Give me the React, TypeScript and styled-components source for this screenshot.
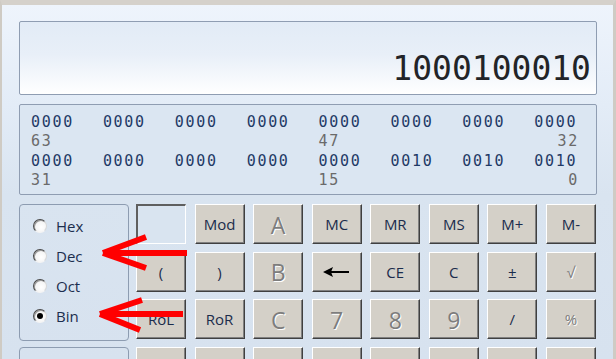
import React from "react";
import styled, { createGlobalStyle } from "styled-components";

const Global = createGlobalStyle`
  html, body { margin: 0; padding: 0; overflow: hidden; }
  body { width: 616px; height: 359px; background: #d4d0c8; }
`;

const Window = styled.div`
  position: relative;
  box-sizing: border-box;
  width: 616px;
  height: 359px;
  overflow: hidden;
  border-top: 5px solid #d5d1cb;
  border-left: 2px solid #cfcbc4;
  border-right: 3px solid #cfcbc4;
  background: linear-gradient(#eef4fc 0px, #e3ecf7 100px, #d9e4f0 190px, #d7e2ef 354px);
  padding: 16px 16px 0 17px;
  display: flex;
  flex-direction: column;
  gap: 9px;
  font-family: "Open Sans", "Noto Sans", sans-serif;
  & > * { flex-shrink: 0; }
`;

const Display = styled.div`
  box-sizing: border-box;
  height: 74px;
  border: 1px solid #8f9db2;
  border-radius: 2px;
  background: linear-gradient(#e2ebf6 0%, #e8eff8 45%, #ffffff 100%);
  display: flex;
  justify-content: flex-end;
  align-items: flex-end;
  padding: 0 5px 9px 0;
  font-family: "DejaVu Sans Mono", "Liberation Mono", monospace;
  font-size: 33px;
  line-height: 33px;
  color: #222428;
`;

const Bits = styled.div`
  box-sizing: border-box;
  height: 91px;
  border: 1px solid #8f9db2;
  border-radius: 2px;
  background: #dbe6f2;
  padding: 8px 0 0 11px;
  font-family: "DejaVu Sans Mono", "Liberation Mono", monospace;
  font-size: 15px;
  line-height: 19.3px;
`;

const BitRow = styled.div`
  display: grid;
  grid-template-columns: repeat(7, 71.9px) 43px;
`;

const Nibble = styled.span`
  color: #1f3a66;
  letter-spacing: 1.7px;
`;

const Index = styled.span<{ $right?: boolean }>`
  color: #6a6a6a;
  letter-spacing: 1.7px;
  text-align: ${(p) => (p.$right ? "right" : "left")};
  margin-right: ${(p) => (p.$right ? "-1.7px" : "0")};
`;

const Lower = styled.div`
  display: flex;
  gap: 7px;
`;

const LeftCol = styled.div`
  display: flex;
  flex-direction: column;
  gap: 6px;
`;

const Group = styled.div<{ $h: number }>`
  box-sizing: border-box;
  width: 110px;
  height: ${(p) => p.$h}px;
  border: 1px solid #8d9cb1;
  border-radius: 4px;
  padding: 6px 0 0 13px;
  display: flex;
  flex-direction: column;
`;

const RadioRow = styled.div`
  height: 30px;
  display: flex;
  align-items: center;
  gap: 9px;
  font-size: 15px;
  color: #1c2e4e;
`;

const RadioDot = styled.span<{ $on?: boolean }>`
  position: relative;
  box-sizing: border-box;
  width: 14px;
  height: 14px;
  border-radius: 50%;
  border: 1px solid;
  border-color: #4a4a4a #d8d8d8 #f4f4f4 #4a4a4a;
  background: radial-gradient(circle at 60% 60%, #ffffff 0%, #f2f2f2 70%, #c8c8c8 100%);
  box-shadow: inset 1px 1px 0 #9a9a9a;
  &::after {
    content: "";
    display: ${(p) => (p.$on ? "block" : "none")};
    position: absolute;
    left: 3px;
    top: 3px;
    width: 6px;
    height: 6px;
    border-radius: 50%;
    background: #000;
  }
`;

const Keys = styled.div`
  display: grid;
  grid-template-columns: repeat(8, 50px);
  grid-auto-rows: 40px;
  column-gap: 8.57px;
  row-gap: 7.67px;
`;

const Key = styled.div<{ $kind: string }>`
  box-sizing: border-box;
  display: flex;
  align-items: center;
  justify-content: center;
  background: #d4d0c8;
  border-top: 1px solid #ffffff;
  border-left: 1px solid #ffffff;
  border-right: 1px solid #404040;
  border-bottom: 1px solid #404040;
  box-shadow: inset -1px -1px 0 #808080;
  font-size: ${(p) => (p.$kind === "big" ? "23px" : "15px")};
  color: ${(p) => (p.$kind === "big" || p.$kind === "dim" ? "#7d7d7d" : "#1b2c4c")};
  text-shadow: ${(p) => (p.$kind === "big" || p.$kind === "dim" ? "1px 1px 0 #ffffff" : "none")};
  padding-top: ${(p) => (p.$kind === "big" ? "1px" : "0")};
`;

const Sunken = styled.div`
  box-sizing: border-box;
  border-top: 2px solid #5f5f5f;
  border-left: 2px solid #5f5f5f;
  border-right: 1px solid #ffffff;
  border-bottom: 1px solid #ffffff;
  background: #d9e4f0;
`;

const Overlay = styled.svg`
  position: absolute;
  left: -2px;
  top: -5px;
  pointer-events: none;
`;

const BackArrow = () => (
  <svg width="28" height="12" viewBox="0 0 28 12">
    <polygon points="0,6 10,1 8,6 10,11" fill="#000" />
    <rect x="7" y="5" width="19" height="2" fill="#000" />
  </svg>
);

type K = { l: string; k: string };
const keys: K[] = [
  { l: "", k: "sunken" },
  { l: "Mod", k: "n" },
  { l: "A", k: "big" },
  { l: "MC", k: "n" },
  { l: "MR", k: "n" },
  { l: "MS", k: "n" },
  { l: "M+", k: "n" },
  { l: "M-", k: "n" },
  { l: "(", k: "n" },
  { l: ")", k: "n" },
  { l: "B", k: "big" },
  { l: "", k: "back" },
  { l: "CE", k: "n" },
  { l: "C", k: "n" },
  { l: "±", k: "n" },
  { l: "√", k: "dim" },
  { l: "RoL", k: "n" },
  { l: "RoR", k: "n" },
  { l: "C", k: "big" },
  { l: "7", k: "big" },
  { l: "8", k: "big" },
  { l: "9", k: "big" },
  { l: "/", k: "n" },
  { l: "%", k: "dim" },
  ...Array.from({ length: 8 }, () => ({ l: "", k: "n" })),
];

const row1 = ["0000", "0000", "0000", "0000", "0000", "0000", "0000", "0000"];
const row2 = ["0000", "0000", "0000", "0000", "0000", "0010", "0010", "0010"];

const IndexRow = ({ a, b, c }: { a: string; b: string; c: string }) => (
  <BitRow>
    <Index>{a}</Index>
    <span />
    <span />
    <span />
    <Index>{b}</Index>
    <span />
    <span />
    <Index $right>{c}</Index>
  </BitRow>
);

export default function App() {
  return (
    <>
      <Global />
      <Window>
        <Display>1000100010</Display>
        <Bits>
          <BitRow>
            {row1.map((n, i) => (
              <Nibble key={i}>{n}</Nibble>
            ))}
          </BitRow>
          <IndexRow a="63" b="47" c="32" />
          <BitRow>
            {row2.map((n, i) => (
              <Nibble key={i}>{n}</Nibble>
            ))}
          </BitRow>
          <IndexRow a="31" b="15" c="0" />
        </Bits>
        <Lower>
          <LeftCol>
            <Group $h={137}>
              {["Hex", "Dec", "Oct", "Bin"].map((m) => (
                <RadioRow key={m}>
                  <RadioDot $on={m === "Bin"} />
                  {m}
                </RadioRow>
              ))}
            </Group>
            <Group $h={40} />
          </LeftCol>
          <Keys>
            {keys.map((k, i) =>
              k.k === "sunken" ? (
                <Sunken key={i} />
              ) : (
                <Key key={i} $kind={k.k}>
                  {k.k === "back" ? <BackArrow /> : k.l}
                </Key>
              )
            )}
          </Keys>
        </Lower>
        <Overlay width="616" height="359" viewBox="0 0 616 359">
          <g stroke="#ff0000" strokeWidth="6" fill="none" strokeLinecap="butt">
            <line x1="104" y1="253" x2="187" y2="253" />
            <line x1="103" y1="253" x2="146" y2="237" />
            <line x1="103" y1="253" x2="146" y2="268" />
            <line x1="101" y1="314" x2="183" y2="314" />
            <line x1="100" y1="314" x2="142" y2="300" />
            <line x1="100" y1="314" x2="140" y2="330" />
          </g>
        </Overlay>
      </Window>
    </>
  );
}
